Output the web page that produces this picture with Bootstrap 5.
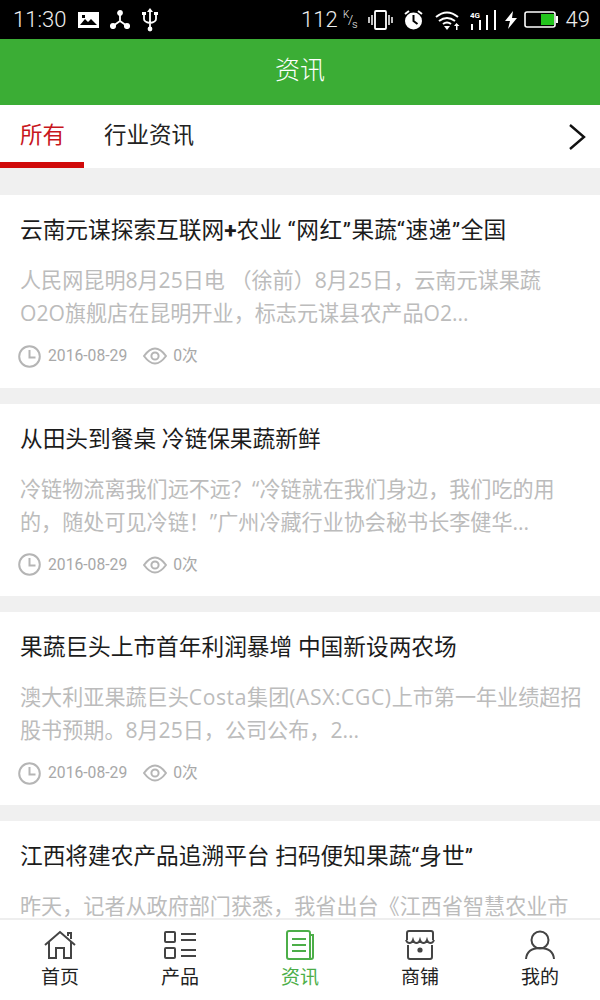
<!DOCTYPE html>
<html lang="zh">
<head>
  <meta charset="UTF-8" />
  <title>资讯</title>
  <meta name="viewport" content="width=device-width, initial-scale=1" />
  <link href="https://cdn.jsdelivr.net/npm/bootstrap@5.3.0/dist/css/bootstrap.min.css" rel="stylesheet" />
  <style>
    html, body { height: 1000px; overflow: hidden; }
    body {
      background: #f0f0f0;
      font-family: Roboto, "Noto Sans CJK SC", sans-serif;
      color: #222;
    }
    .app-shell { height: 1000px; width: 600px; }
    .status-bar {
      height: 39px;
      background: #000;
      color: #eee;
      font-family: Roboto, sans-serif;
      font-size: 22px;
      font-weight: 300;
      padding: 0 10px 0 13px;
    }
    .status-left { gap: 11.5px; }
    .sg-5 { margin-left: 5px; }
    .sg-7 { margin-left: 7px; }
    .sg-8 { margin-left: 8px; }
    .sg-9 { margin-left: 9px; }
    .sg-10 { margin-left: 10px; }
    .sg-11 { margin-left: 11px; }
    .sg-12 { margin-left: 12px; }
    .app-head {
      height: 66px;
      padding-bottom: 3px;
      background: #3bad35;
      color: #fff;
      font-size: 25px;
      font-weight: 300;
    }
    .tab-strip { height: 63px; background: #fff; }
    .tab-item {
      height: 63px;
      font-size: 22.5px;
      line-height: 60px;
      padding: 0 20px;
      color: #222;
    }
    .tab-item.is-active {
      width: 84px;
      padding-right: 0;
      color: #c8161d;
      border-bottom: 6px solid #d00a0a;
    }
    .tab-more { margin-right: 13px; }
    .news-list { padding-top: 27px; overflow: hidden; min-height: 0; gap: 16px; }
    .news-item { height: 192.5px; background: #fff; padding: 19px 20px 0; flex: none; }
    .news-title { font-size: 22.7px; line-height: 34px; margin: 0 0 15px; color: #1c1c1c; white-space: nowrap; }
    .news-text {
      font-family: "Open Sans", "Noto Sans CJK SC", sans-serif;
      font-size: 21.1px;
      line-height: 33px;
      color: #bcbcbc;
      margin: 0 0 15px;
      height: 66px;
      white-space: nowrap;
    }
    .latin-wide { letter-spacing: .6px; }
    .news-meta { font-size: 15.7px; color: #a8a8a8; height: 24px; margin-left: -2px; }
    .meta-clock { margin-right: 7px; }
    .meta-eye { margin: 0 6px 0 16px; }
    .foot-nav { height: 82px; background: #fff; border-top: 2px solid #eee; flex: none; }
    .foot-item { width: 120px; font-size: 19px; line-height: 24px; color: #222; padding-top: 10px; }
    .foot-item.is-active { color: #4cae48; }
    .foot-item svg { display: block; margin-bottom: 6px; }
  </style>
</head>
<body>
  <div class="app-shell d-flex flex-column">
    <div class="status-bar d-flex justify-content-between align-items-center flex-shrink-0">
      <div class="status-left d-flex align-items-center">
        <span>11:30</span>
        <svg width="21" height="16" viewBox="0 0 21 16"><path fill="#fff" d="M0 0h21v16H0z"/><path fill="#000" d="M2 13l5-6 3 3 3-3 6 6zM4 3h3v3H4z"/></svg>
        <svg width="20" height="19" viewBox="0 0 20 19" fill="none" stroke="#fff" stroke-width="1.8"><path d="M10 3v8M10 11l-7 5M10 11l7 5"/><circle cx="10" cy="3" r="2" fill="#fff"/><circle cx="3" cy="16" r="2.2" fill="#fff"/><circle cx="17" cy="16" r="2.2" fill="#fff"/></svg>
        <svg width="16" height="24" viewBox="0 0 16 24" fill="none" stroke="#fff" stroke-width="1.8"><path d="M8 3v18M2 7v4q0 3 6 4q6-1 6-4V7"/><path fill="#fff" stroke="none" d="M8 0l3 4H5zM0 4h4v3H0zM12 4h4v3h-4z"/><circle cx="8" cy="21" r="2.4" fill="#fff" stroke="none"/></svg>
      </div>
      <div class="d-flex align-items-center">
        <span>112</span>
        <svg class="sg-5" width="15" height="20" viewBox="0 0 15 20"><text x="0" y="8" font-size="10" font-family="Roboto" fill="#eee">K</text><text x="5" y="14" font-size="13" font-family="Roboto" fill="#eee">/</text><text x="9" y="18" font-size="11" font-family="Roboto" fill="#eee">s</text></svg>
        <svg class="sg-10" width="25" height="20" viewBox="0 0 25 20" fill="none" stroke="#fff" stroke-width="1.8"><rect x="7" y="1" width="11" height="18" rx="1"/><path d="M1 7v6M4 5v10M21 5v10M24 7v6" stroke-width="1.5"/></svg>
        <svg class="sg-11" width="19" height="20" viewBox="0 0 19 20"><circle cx="9.500" cy="11" r="8.500" fill="#fff"/><path d="M9.500 5v6l4 3" fill="none" stroke="#000" stroke-width="2"/><path d="M1 4l4-3M18 4l-4-3" stroke="#fff" stroke-width="2"/></svg>
        <svg class="sg-12" width="25" height="20" viewBox="0 0 25 20" fill="none" stroke="#fff" stroke-width="2"><path d="M1 7q11-9 22 0M4 11q8-6 16 0M8 14q4-3 8 0"/><path fill="#fff" stroke="none" d="M9 16h6l-3 4zM21 20v-4h-2l2.500-3 3 3h-2v4z"/></svg>
        <svg class="sg-10" width="26" height="20" viewBox="0 0 26 20" fill="#fff"><path d="M1 14h2v6H1zM9 10h2v10H9zM16 5h2v15h-2zM24 0h2v20h-2z"/><text x="0" y="8" font-size="8" font-family="Roboto" font-weight="700">4G</text></svg>
        <svg class="sg-9" width="12" height="18" viewBox="0 0 12 18" fill="#fff"><path d="M8 0L0 10h5l-2 8 9-11H7z"/></svg>
        <svg class="sg-7" width="34" height="18" viewBox="0 0 34 18"><rect x="1" y="1" width="30" height="15" rx="2" fill="none" stroke="#fff" stroke-width="1.6"/><rect x="17" y="3" width="13" height="11" fill="#22c41c"/><rect x="32" y="5" width="2" height="7" fill="#fff"/></svg>
        <span class="sg-8">49</span>
      </div>
    </div>

    <div class="app-head d-flex align-items-center justify-content-center flex-shrink-0">资讯</div>

    <div class="tab-strip d-flex flex-shrink-0">
      <div class="tab-item is-active">所有</div>
      <div class="tab-item">行业资讯</div>
      <svg class="tab-more ms-auto align-self-center" width="20" height="28" viewBox="0 0 20 28" fill="none" stroke="#111" stroke-width="2.4"><path d="M3 2l14 12L3 26"/></svg>
    </div>

    <div class="news-list d-flex flex-column flex-grow-1">
      <div class="news-item">
        <h2 class="news-title fw-normal">云南元谋探索互联网<b>+</b>农业 <span class="latin-wide">“网红”</span>果蔬<span class="latin-wide">“速递”</span>全国</h2>
        <p class="news-text">人民网昆明8月25日电 （徐前）8月25日，云南元谋果蔬<br>O2O旗舰店在昆明开业，标志元谋县农产品O2...</p>
        <div class="news-meta d-flex align-items-center">
          <svg class="meta-clock" width="23" height="23" viewBox="0 0 23 23" fill="none" stroke="#b5b5b5" stroke-width="2"><circle cx="11.500" cy="11.500" r="10.300"/><path d="M11.500 5v7.500h6"/></svg>
          <span>2016-08-29</span>
          <svg class="meta-eye" width="24" height="18" viewBox="0 0 24 18" fill="none" stroke="#b5b5b5" stroke-width="2"><path d="M1 9q11-15 22 0q-11 15-22 0z"/><circle cx="12" cy="9" r="3.600"/></svg>
          <span>0次</span>
        </div>
      </div>
      <div class="news-item">
        <h2 class="news-title fw-normal">从田头到餐桌 冷链保果蔬新鲜</h2>
        <p class="news-text">冷链物流离我们远不远？“冷链就在我们身边，我们吃的用<br>的，随处可见冷链！”广州冷藏行业协会秘书长李健华...</p>
        <div class="news-meta d-flex align-items-center">
          <svg class="meta-clock" width="23" height="23" viewBox="0 0 23 23" fill="none" stroke="#b5b5b5" stroke-width="2"><circle cx="11.500" cy="11.500" r="10.300"/><path d="M11.500 5v7.500h6"/></svg>
          <span>2016-08-29</span>
          <svg class="meta-eye" width="24" height="18" viewBox="0 0 24 18" fill="none" stroke="#b5b5b5" stroke-width="2"><path d="M1 9q11-15 22 0q-11 15-22 0z"/><circle cx="12" cy="9" r="3.600"/></svg>
          <span>0次</span>
        </div>
      </div>
      <div class="news-item">
        <h2 class="news-title fw-normal">果蔬巨头上市首年利润暴增 中国新设两农场</h2>
        <p class="news-text">澳大利亚果蔬巨头<span class="latin-wide">Costa</span>集团<span class="latin-wide">(ASX:CGC)</span>上市第一年业绩超招<br>股书预期。8月25日，公司公布，2...</p>
        <div class="news-meta d-flex align-items-center">
          <svg class="meta-clock" width="23" height="23" viewBox="0 0 23 23" fill="none" stroke="#b5b5b5" stroke-width="2"><circle cx="11.500" cy="11.500" r="10.300"/><path d="M11.500 5v7.500h6"/></svg>
          <span>2016-08-29</span>
          <svg class="meta-eye" width="24" height="18" viewBox="0 0 24 18" fill="none" stroke="#b5b5b5" stroke-width="2"><path d="M1 9q11-15 22 0q-11 15-22 0z"/><circle cx="12" cy="9" r="3.600"/></svg>
          <span>0次</span>
        </div>
      </div>
      <div class="news-item">
        <h2 class="news-title fw-normal">江西将建农产品追溯平台 扫码便知果蔬“身世”</h2>
        <p class="news-text">昨天，记者从政府部门获悉，我省出台《江西省智慧农业市</p>
      </div>
    </div>

    <div class="foot-nav d-flex">
      <div class="foot-item d-flex flex-column align-items-center">
        <svg width="32" height="30" viewBox="0 0 32 30" fill="none" stroke="#444" stroke-width="2"><path d="M1 15L16 2l15 13M5 12v16h7V18h8v10h7V12M24 6V3h3v6"/></svg>首页
      </div>
      <div class="foot-item d-flex flex-column align-items-center">
        <svg width="32" height="30" viewBox="0 0 32 30" fill="none" stroke="#444" stroke-width="2"><rect x="1" y="2" width="10" height="10" rx="1"/><rect x="1" y="18" width="10" height="10" rx="1"/><path d="M17 4h15M17 10h15M17 20h15M17 26h15"/></svg>产品
      </div>
      <div class="foot-item is-active d-flex flex-column align-items-center">
        <svg width="30" height="30" viewBox="0 0 30 30" fill="none" stroke="#4cae48" stroke-width="2"><path d="M25 5V3q0-2-2-2H4Q2 1 2 3v24q0 2 2 2h22q2 0 2-2V5h-3v24M7 9h14M7 15h14M7 21h14"/></svg>资讯
      </div>
      <div class="foot-item d-flex flex-column align-items-center">
        <svg width="32" height="30" viewBox="0 0 32 30" fill="none" stroke="#444" stroke-width="2"><path d="M3 10V3q0-2 2-2h22q2 0 2 2v7"/><path d="M2 10q1 3 3.500 3T9 10q1 3 3.500 3t3.500-3q1 3 3.500 3t3.500-3q1 3 3.500 3t3.500-3"/><path d="M4 15v12q0 2 2 2h20q2 0 2-2V15"/><circle cx="16" cy="20" r="2.600" fill="#444" stroke="none"/></svg>商铺
      </div>
      <div class="foot-item d-flex flex-column align-items-center">
        <svg width="32" height="30" viewBox="0 0 32 30" fill="none" stroke="#444" stroke-width="2"><circle cx="16" cy="10" r="8.500"/><path d="M2 29q1-11 14-11t14 11"/></svg>我的
      </div>
    </div>
  </div>
  <script src="https://cdn.jsdelivr.net/npm/bootstrap@5.3.0/dist/js/bootstrap.bundle.min.js"></script>
</body>
</html>
